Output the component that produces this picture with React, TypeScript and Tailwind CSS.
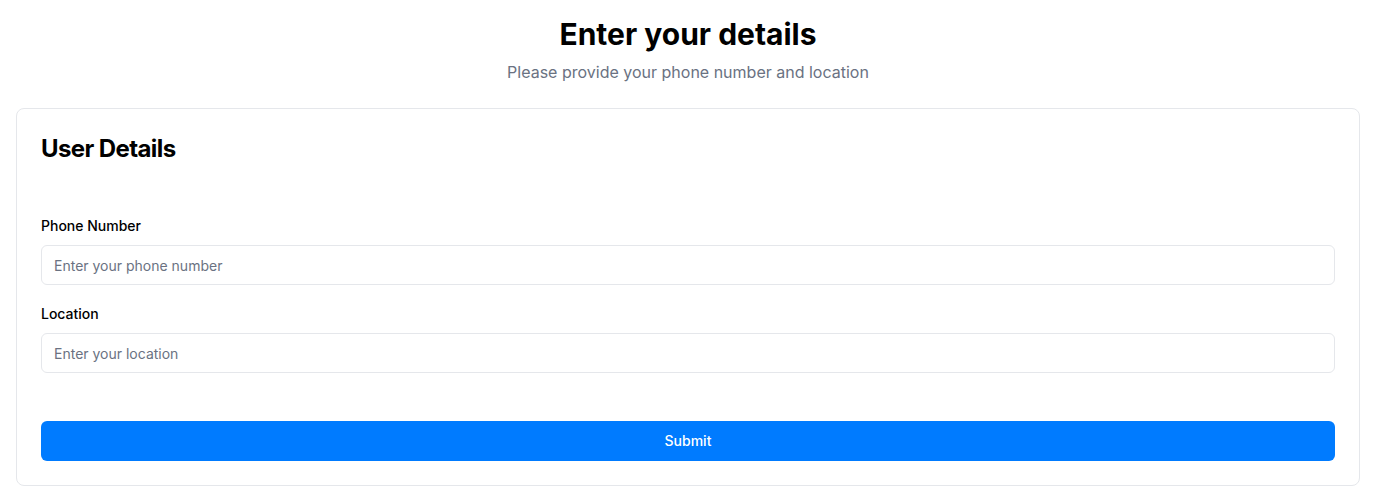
export default function App() {
    return (
        <div className="min-h-screen bg-white px-4 pt-4 pb-4" style={{ fontFamily: "Inter, 'Noto Sans', sans-serif" }}>
            {/* Header */}
            <div className="text-center mb-6">
                <h1 className="text-3xl font-bold text-black">Enter your details</h1>
                <p className="mt-2 text-base text-gray-500">Please provide your phone number and location</p>
            </div>

            {/* Card */}
            <div className="rounded-lg border border-gray-200 bg-white p-6">
                <h2 className="text-2xl font-bold text-black tracking-tight">User Details</h2>

                <form className="mt-[51px]" onSubmit={(e) => e.preventDefault()}>
                    <div>
                        <label className="block text-sm font-medium text-black mb-[9px]">Phone Number</label>
                        <input
                            type="tel"
                            placeholder="Enter your phone number"
                            className="block w-full h-10 rounded-md border border-gray-200 px-3 text-sm text-black placeholder:text-gray-500 outline-none"
                        />
                    </div>
                    <div className="mt-[19px]">
                        <label className="block text-sm font-medium text-black mb-[9px]">Location</label>
                        <input
                            type="text"
                            placeholder="Enter your location"
                            className="block w-full h-10 rounded-md border border-gray-200 px-3 text-sm text-black placeholder:text-gray-500 outline-none"
                        />
                    </div>
                    <button
                        type="submit"
                        className="mt-12 block w-full h-10 rounded-md bg-[#007bff] text-sm font-medium text-white"
                    >
                        Submit
                    </button>
                </form>
            </div>
        </div>
    );
}
